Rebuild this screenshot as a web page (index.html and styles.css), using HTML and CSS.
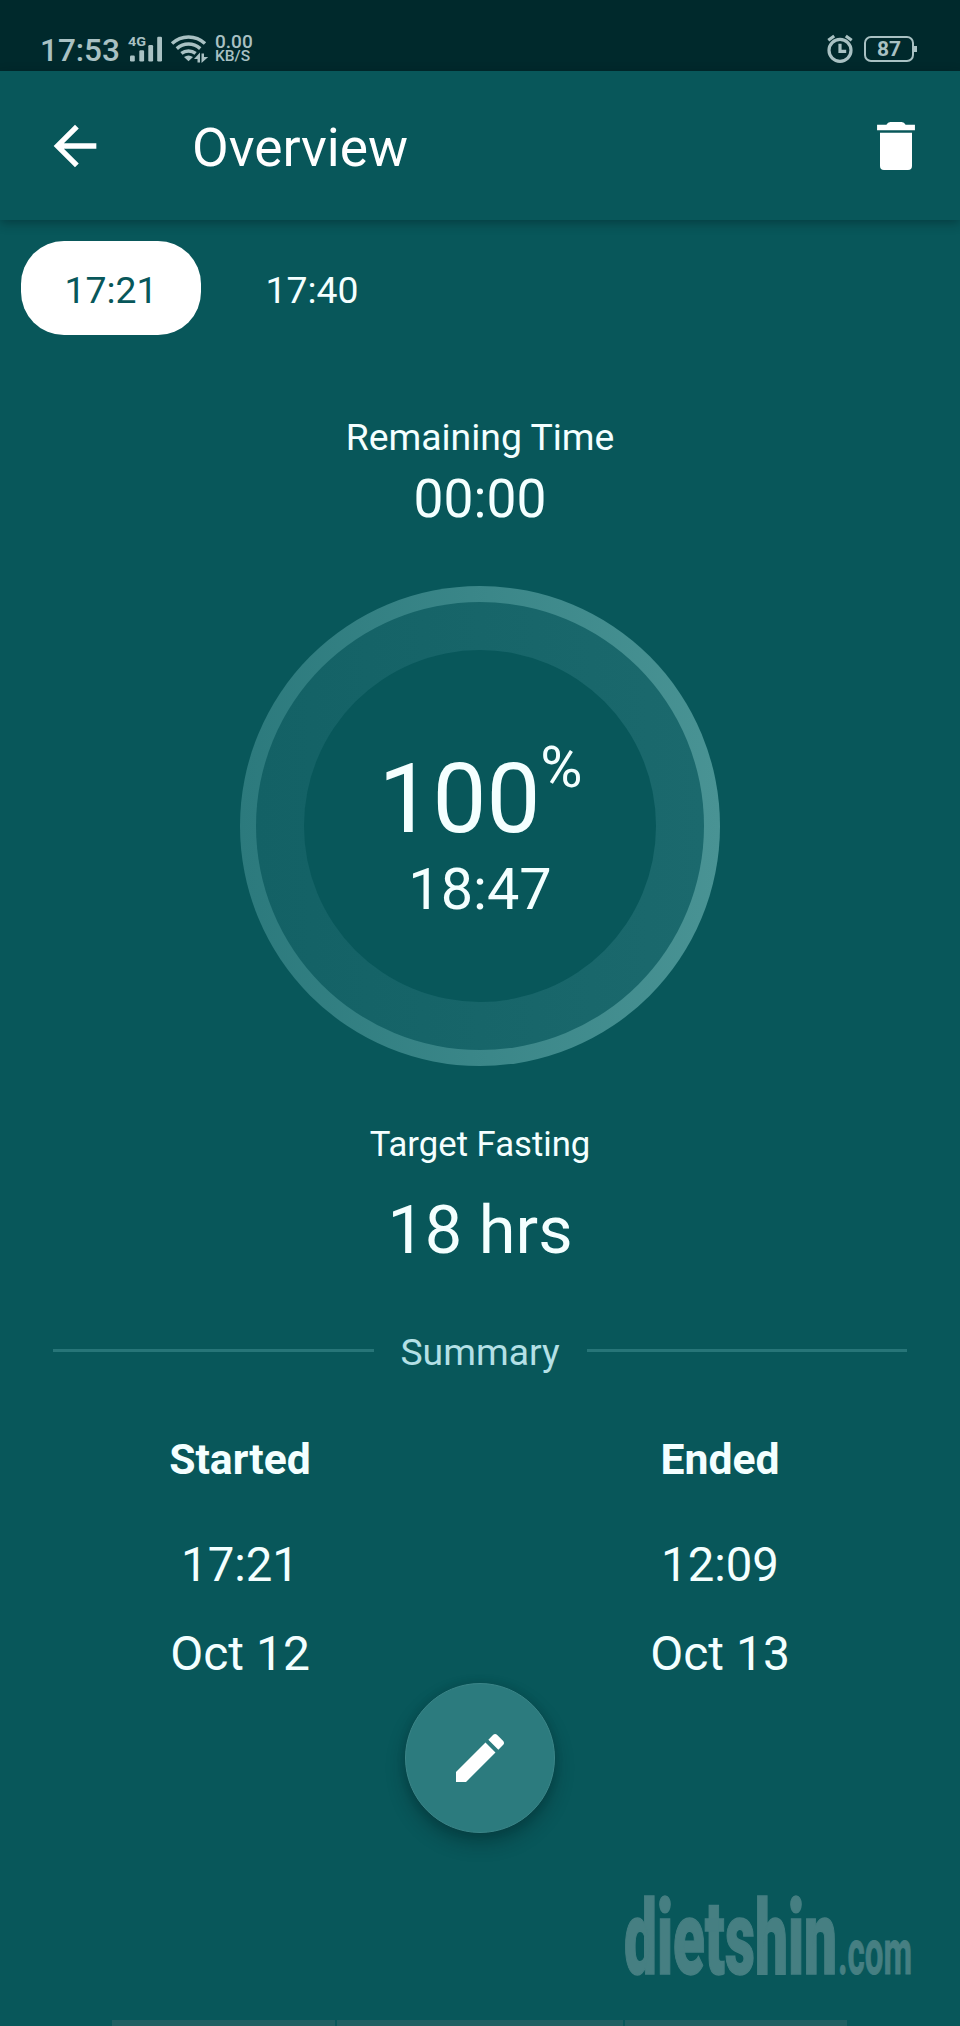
FILE: index.html
```html
<!DOCTYPE html>
<html lang="en">
<head>
<meta charset="utf-8">
<title>Overview</title>
<link rel="stylesheet" href="styles.css">
</head>
<body>
<div class="screen">
  <div class="status">
    <span class="clock">17:53</span>
    <svg class="signal" width="36" height="30" viewBox="0 0 36 30">
      <text class="net" x="0" y="13.2" textLength="18" lengthAdjust="spacingAndGlyphs">4G</text>
      <rect x="2" y="22.5" width="4.8" height="6" rx="1.2"/>
      <rect x="11.3" y="17.2" width="4.8" height="11.3" rx="1.2"/>
      <rect x="20.3" y="12" width="4.8" height="16.5" rx="1.2"/>
      <rect x="29.2" y="3.7" width="4.8" height="24.8" rx="1.2"/>
    </svg>
    <svg class="wifi" width="40" height="30" viewBox="0 0 40 30">
      <g fill="none" stroke="currentColor" stroke-width="3.5">
        <path d="M2 10.6Q9 4 18.5 4T35 10.6"/>
        <path d="M6.8 15.6Q12 11 18.5 11T30.2 15.6"/>
        <path d="M11.4 20.4Q14.5 17.9 18.5 17.9T25.6 20.4"/>
      </g>
      <path d="M14 24Q18.500 21 23 24L18.500 28.300Z"/>
      <path d="M24 26L30 19.500V29.500H27.500V26Z"/>
      <path d="M31.500 20.500H34V24H38.200L31.500 30Z"/>
    </svg>
    <span class="rate"><span>0.00</span><span class="unit">KB/S</span></span>
    <svg class="alarm" width="28" height="30" viewBox="0 0 28 30">
      <g fill="none" stroke="currentColor" stroke-width="3.200">
        <circle cx="14" cy="17.300" r="11"/>
        <path d="M2.300 7.200L8.200 3M25.700 7.200L19.800 3"/>
        <path d="M14 10.800V18.300H20.200"/>
      </g>
    </svg>
    <span class="battery">87</span>
  </div>

  <header class="appbar">
    <svg class="back" width="64" height="64" viewBox="0 0 24 24"><path d="M20 11H7.830l5.590-5.590L12 4l-8 8 8 8 1.410-1.410L7.830 13H20v-2z"/></svg>
    <h1 class="title">Overview</h1>
    <svg width="64" height="64" viewBox="0 0 24 24"><path d="M6 7h12v12.500q0 1.500-1.500 1.500h-9Q6 21 6 19.500zM4.900 4H8.400Q8.900 3 9.900 3h4.200q1 0 1.500 1h3.500v2.100H4.900z"/></svg>
  </header>

  <nav class="tabs">
    <span class="tab active">17:21</span>
    <span class="tab">17:40</span>
  </nav>

  <section class="remaining">
    <div class="label">Remaining Time</div>
    <div class="value">00:00</div>
  </section>

  <div class="ring">
    <div class="band">
      <div class="core">
        <div class="percent">100<span class="sign">%</span></div>
        <div class="elapsed">18:47</div>
      </div>
    </div>
  </div>

  <section class="target">
    <div class="target-label">Target Fasting</div>
    <div class="target-value">18 hrs</div>
  </section>

  <div class="divider"><span class="divider-text">Summary</span></div>

  <section class="summary">
    <div class="col">
      <div class="head">Started</div>
      <div class="time">17:21</div>
      <div class="date">Oct 12</div>
    </div>
    <div class="col">
      <div class="head">Ended</div>
      <div class="time">12:09</div>
      <div class="date">Oct 13</div>
    </div>
  </section>

  <div class="fab">
    <svg width="64" height="64" viewBox="0 0 24 24"><path d="M3 17.250V21h3.750L17.810 9.940l-3.750-3.750L3 17.250zM20.710 7.040c.39-.39.39-1.020 0-1.410l-2.340-2.340c-.39-.39-1.020-.39-1.410 0l-1.830 1.830 3.750 3.750 1.830-1.830z"/></svg>
  </div>

  <svg class="brand" width="300" height="130" viewBox="0 0 300 130">
    <text class="brand-name" x="4" y="102" textLength="213" lengthAdjust="spacingAndGlyphs">dietshin</text>
    <text class="brand-tld" x="218" y="102" textLength="74" lengthAdjust="spacingAndGlyphs">.com</text>
  </svg>

  <div class="strip"><i></i><i></i><i></i></div>
</div>
</body>
</html>
```

FILE: styles.css
```css
* { box-sizing: border-box; }
body {
  margin: 0;
  background: #08575a;
  color: #f4ffff;
  font-family: Roboto, "Liberation Sans", sans-serif;
}
svg { display: block; flex: none; fill: currentColor; overflow: visible; }
.screen {
  display: flex;
  flex-direction: column;
  width: 960px;
  height: 2026px;
  overflow: hidden;
  background: #08575a;
}

.status {
  display: flex;
  flex: none;
  align-items: flex-start;
  height: 71px;
  padding: 33px 46px 0 40px;
  background: #00292c;
  color: #a9c1c3;
}
.clock { width: 88px; font-size: 31.5px; font-weight: 500; line-height: 35px; }
.net { font-size: 12.5px; font-weight: 700; }
.wifi { margin-left: 6px; }
.rate {
  display: flex;
  flex-direction: column;
  margin: 1px 0 0 5px;
  font-size: 19px;
  font-weight: 500;
  line-height: 15px;
}
.rate .unit { font-size: 15.5px; line-height: 14px; }
.alarm { margin-left: auto; }
.battery {
  position: relative;
  width: 50px;
  height: 26px;
  margin: 3px 0 0 10px;
  border: 2px solid currentColor;
  border-radius: 7px;
  font-size: 21px;
  font-weight: 700;
  line-height: 23px;
  text-align: center;
}
.battery::after {
  content: "";
  position: absolute;
  top: 8px;
  right: -5px;
  width: 3px;
  height: 6px;
  background: currentColor;
}

.appbar {
  display: flex;
  flex: none;
  align-items: center;
  height: 149px;
  padding: 0 32px 0 43px;
  color: #fff;
  background: #08575a;
  box-shadow: 0 3px 10px rgba(0, 20, 25, .38);
}
.title {
  flex: 1;
  margin: 5px 0 0 85px;
  font-size: 53.33px;
  font-weight: 400;
  line-height: 64px;
}

.tabs {
  display: flex;
  flex: none;
  gap: 21px;
  padding: 21px;
}
.tab {
  width: 180px;
  height: 94px;
  border-radius: 43px;
  font-size: 37.33px;
  line-height: 98px;
  text-align: center;
}
.tab.active { background: #fff; color: #08575a; }

.remaining { flex: none; margin-top: 59px; text-align: center; }
.label { font-size: 37.33px; line-height: 44px; }
.value { margin-top: 8px; font-size: 53.33px; line-height: 64px; }

.ring {
  flex: none;
  width: 480px;
  height: 480px;
  margin: 55px auto 0;
  padding: 16px;
  border-radius: 50%;
  background: linear-gradient(90deg, #2c7a7d, #499394);
}
.band {
  height: 100%;
  padding: 48px;
  border-radius: 50%;
  background: linear-gradient(90deg, #136165, #1b696d);
}
.core {
  display: flex;
  flex-direction: column;
  align-items: center;
  height: 100%;
  padding-top: 91px;
  border-radius: 50%;
  background: #08575a;
}
.percent {
  display: flex;
  padding-left: 1px;
  font-size: 96px;
  line-height: 116px;
}
.sign { font-size: 57.6px; line-height: 54px; }
.elapsed { margin-top: 1px; font-size: 57.6px; line-height: 64px; }

.target { flex: none; margin-top: 58px; text-align: center; }
.target-label { font-size: 34.67px; line-height: 41px; }
.target-value { margin-top: 25px; font-size: 66.67px; line-height: 80px; }

.divider {
  display: flex;
  flex: none;
  align-items: center;
  height: 44px;
  margin: 60px 53px 0;
  color: #b4e0e6;
}
.divider::before, .divider::after {
  content: "";
  flex: 1;
  height: 3px;
  margin-bottom: 3px;
  background: #277578;
}
.divider-text {
  width: 213px;
  font-size: 37.33px;
  line-height: 44px;
  text-align: center;
}

.summary { display: grid; flex: none; grid-template-columns: 1fr 1fr; margin-top: 60px; text-align: center; }
.head { font-size: 42.67px; font-weight: 700; line-height: 50px; }
.time { margin-top: 53px; font-size: 47.3px; line-height: 56px; }
.date { margin-top: 33px; font-size: 48px; line-height: 56px; }

.fab {
  display: flex;
  flex: none;
  align-items: center;
  justify-content: center;
  width: 150px;
  height: 150px;
  margin: 1px auto 0;
  border: 1px solid #3b8588;
  border-radius: 50%;
  background: #2c7b7e;
  color: #fff;
  box-shadow: 0 10px 18px rgba(0, 25, 30, .35), 0 0 8px rgba(0, 25, 30, .12);
}

.brand { align-self: flex-end; margin: 39px 40px 0 0; color: #467f82; }
.brand-name { font-size: 103px; font-weight: 900; stroke: currentColor; stroke-width: 1.5px; }
.brand-tld { font-size: 63px; font-weight: 700; stroke: currentColor; stroke-width: 1px; }

.strip {
  display: grid;
  flex: none;
  grid-template-columns: 223px 286px 222px;
  gap: 2px;
  height: 6px;
  margin: auto 0 0 112px;
}
.strip i { background: #205f62; }
```
